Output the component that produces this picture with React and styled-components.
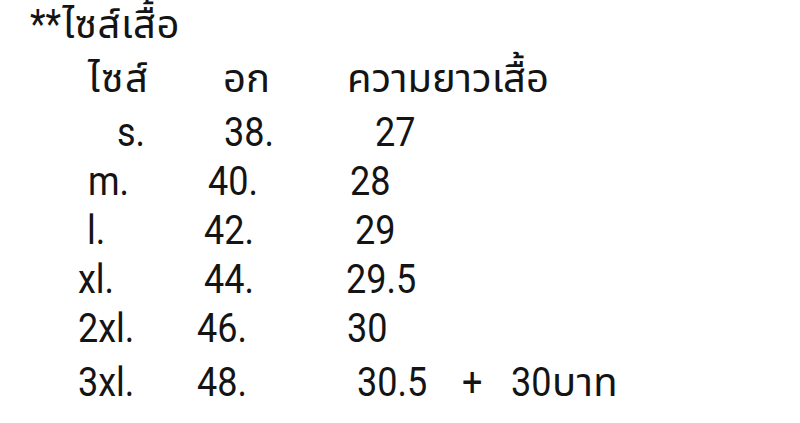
import React from "react";
import styled, { createGlobalStyle } from "styled-components";

const Global = createGlobalStyle`
  html, body { margin: 0; padding: 0; background: #fff; }
  body { font-family: Roboto, "Noto Sans Thai", "Noto Sans", sans-serif; }
`;

const Page = styled.div`
  width: 800px;
  height: 423px;
  background: #fff;
  color: #141414;
  display: flex;
  flex-direction: column;
  overflow: hidden;
`;

const Row = styled.div`
  display: flex;
  align-items: baseline;
  height: ${(p) => p.$h || 49}px;
  line-height: ${(p) => p.$h || 49}px;
  margin-top: ${(p) => p.$mt || 0}px;
  padding-left: ${(p) => p.$x}px;
  font-size: 40px;
  white-space: pre;
`;

const Cell = styled.span`
  flex: none;
  display: inline-block;
`;

const Latin = styled.span`
  display: inline-block;
  transform: scaleX(0.9);
  transform-origin: left center;
  margin-right: ${(p) => p.$trim || 0}px;
`;

const Thai = styled.span`
  display: inline-block;
  letter-spacing: ${(p) => p.$ls || 0}px;
`;

const rows = [
  { h: 50, cells: [[30, [["L", "**", -2], ["T", "ไซส์เสื้อ", 0.6]]]] },
  { h: 58, cells: [[88, [["T", "ไซส์", 1.5]]], [223, [["T", "อก"]]], [347, [["T", "ความยาวเสื้อ"]]]] },
  { cells: [[117, "s."], [224, "38."], [375, "27"]] },
  { cells: [[88, "m."], [208, "40."], [350, "28"]] },
  { cells: [[87, "l."], [204, "42."], [355, "29"]] },
  { cells: [[78, "xl."], [204, "44."], [346, "29.5"]] },
  { cells: [[78, "2xl."], [197, "46."], [347, "30"]] },
  {
    h: 53,
    mt: 3,
    cells: [
      [78, "3xl."],
      [197, "48."],
      [357, "30.5"],
      [462, "+"],
      [511, [["L", "30", -4], ["T", "บาท", 0.5]]],
    ],
  },
];

function Content({ value }) {
  if (typeof value === "string") return <Latin>{value}</Latin>;
  return value.map(([kind, text, extra], k) =>
    kind === "L" ? (
      <Latin key={k} $trim={extra}>
        {text}
      </Latin>
    ) : (
      <Thai key={k} $ls={extra}>
        {text}
      </Thai>
    )
  );
}

export default function App() {
  return (
    <>
      <Global />
      <Page>
        {rows.map((r, i) => (
          <Row key={i} $x={r.cells[0][0]} $h={r.h} $mt={r.mt}>
            {r.cells.map(([x, v], j) => {
              const next = r.cells[j + 1];
              return (
                <Cell key={j} style={next ? { width: next[0] - x } : undefined}>
                  <Content value={v} />
                </Cell>
              );
            })}
          </Row>
        ))}
      </Page>
    </>
  );
}
